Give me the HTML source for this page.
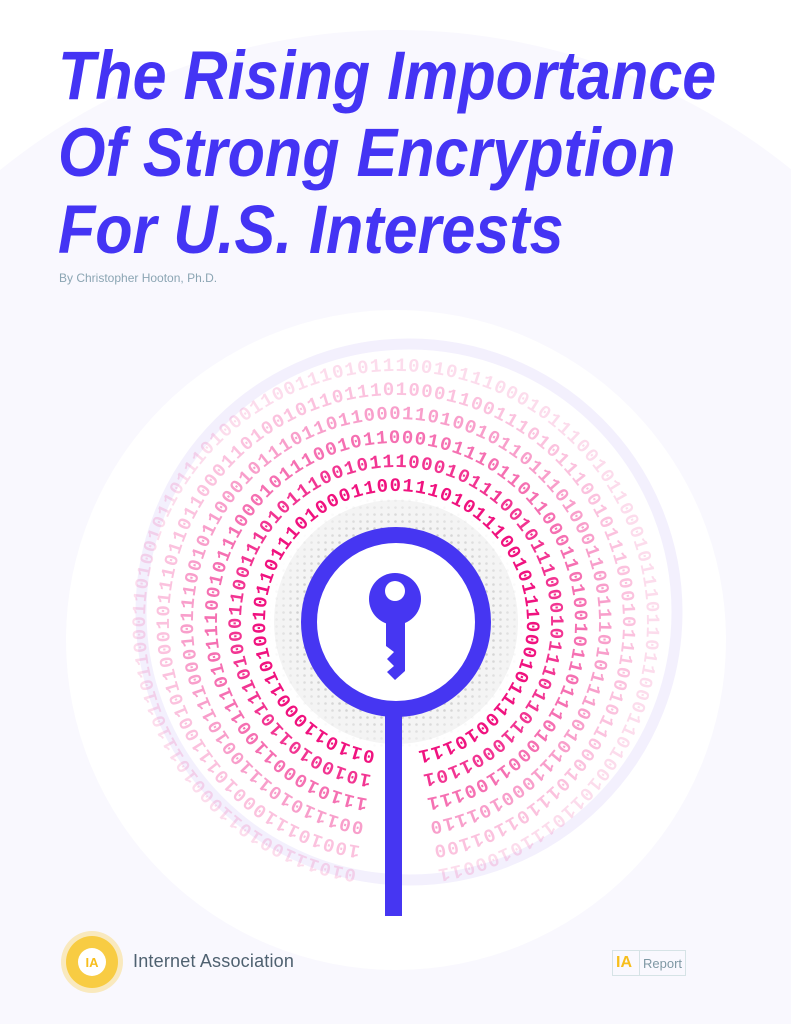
<!DOCTYPE html>
<html><head><meta charset="utf-8"><style>
html,body{margin:0;padding:0;}
body{width:791px;height:1024px;position:relative;overflow:hidden;background:#fff;font-family:"Liberation Sans",sans-serif;}
svg.bg{position:absolute;left:0;top:0;}
h1{position:absolute;left:58px;top:37px;margin:0;font:italic bold 69px/77px "Liberation Sans",sans-serif;color:#4434f4;letter-spacing:0;white-space:nowrap;transform:scaleX(0.885);transform-origin:0 0;}
.by{position:absolute;left:59px;top:271px;font-size:12px;color:#8ba5b3;}
.ia{position:absolute;left:133px;top:951px;font-size:18px;color:#4f6170;letter-spacing:0.2px;}
.rep{position:absolute;left:612px;top:950px;width:74px;height:26px;border:1px solid #d6e3e6;box-sizing:border-box;}
.rep .l{position:absolute;left:3px;top:3px;font:bold 16px "Liberation Sans",sans-serif;color:#f7be1c;}
.rep .d{position:absolute;left:26px;top:0;width:1px;height:24px;background:#d6e3e6;}
.rep .r{position:absolute;left:30px;top:5px;font-size:13px;color:#7f98a4;}
</style></head><body>
<svg class="bg" width="791" height="1024" viewBox="0 0 791 1024">
<defs>
<pattern id="dots" width="7" height="7" patternUnits="userSpaceOnUse"><circle cx="3.5" cy="3.5" r="1.3" fill="#9a9a9a"/></pattern>
<radialGradient id="fade" cx="0.5" cy="0.5" r="0.5"><stop offset="0.6" stop-color="#fff" stop-opacity="1"/><stop offset="1" stop-color="#fff" stop-opacity="0"/></radialGradient>
<mask id="m"><circle cx="396" cy="622" r="128" fill="url(#fade)"/></mask>
</defs>
<circle cx="396" cy="660" r="630" fill="#f9f8fe"/>
<circle cx="396" cy="640" r="330" fill="#fff"/>
<circle cx="409" cy="612" r="268" fill="none" stroke="#f3f0fd" stroke-width="11"/>
<circle cx="396" cy="622" r="122" fill="#f4f4f4"/>
<rect x="260" y="490" width="280" height="270" fill="url(#dots)" mask="url(#m)" opacity="0.7"/>
<g font-family="Liberation Mono, monospace" font-weight="bold" font-size="19" fill="#f0127f">
<path id="r1" d="M375.5 751.4 A131 131 0 1 1 416.5 751.4" fill="none"/>
<path id="r2" d="M371.8 775.1 A155 155 0 1 1 420.2 775.1" fill="none"/>
<path id="r3" d="M368 798.8 A179 179 0 1 1 424 798.8" fill="none"/>
<path id="r4" d="M364.3 822.5 A203 203 0 1 1 427.7 822.5" fill="none"/>
<path id="r5" d="M360.5 846.2 A227 227 0 1 1 431.5 846.2" fill="none"/>
<path id="r6" d="M356.7 869.9 A251 251 0 1 1 435.3 869.9" fill="none"/>
<text><textPath href="#r1" textLength="780" lengthAdjust="spacing">011011000110100101101110100011001110101110010111000101110010111</textPath></text>
<text opacity="0.85"><textPath href="#r2" textLength="922" lengthAdjust="spacing">10100101101110100011001110101110010111000101110010111000101110110110001101</textPath></text>
<text opacity="0.6"><textPath href="#r3" textLength="1065" lengthAdjust="spacing">1110100011001110101110010111000101110010110001011101101100011010010110111010001100111</textPath></text>
<text opacity="0.4"><textPath href="#r4" textLength="1209" lengthAdjust="spacing">0011101011100101110001011100101100010111011011000110100101101110100011001110101110010111000101110</textPath></text>
<text opacity="0.25"><textPath href="#r5" textLength="1352" lengthAdjust="spacing">100101110001011100101100010111011011000110100101101110100011001110101110010111000101110010110001011101101100</textPath></text>
<text opacity="0.14"><textPath href="#r6" textLength="1495" lengthAdjust="spacing">010111001011000101110110110001101001011011101000110011101011100101110001011100101100010111011011000110100101101110100011</textPath></text>
</g>
<circle cx="396" cy="622" r="87" fill="#fff" stroke="#4636f2" stroke-width="16"/>
<rect x="385" y="708" width="17" height="208" fill="#4636f2"/>
<circle cx="395" cy="599" r="26" fill="#4636f2"/>
<circle cx="395" cy="591" r="10" fill="#fff"/>
<path d="M386 618 L405 618 L405 671 L395 680 L387 672 L394 666 L387 659 L394 652 L386 646 Z" fill="#4636f2"/>
<g>
<circle cx="92" cy="962" r="31" fill="#f8c62a" opacity="0.3"/>
<circle cx="92" cy="962" r="26" fill="#f7c21a" opacity="0.75"/>
<circle cx="92" cy="962" r="14" fill="#fff"/>
<text x="92" y="967" text-anchor="middle" font-family="Liberation Sans, sans-serif" font-weight="bold" font-size="13" fill="#f7be1c">IA</text>
</g>
</svg>
<h1>The Rising Importance<br>Of Strong Encryption<br>For U.S. Interests</h1>
<div class="by">By Christopher Hooton, Ph.D.</div>
<div class="ia">Internet Association</div>
<div class="rep"><span class="l">IA</span><span class="d"></span><span class="r">Report</span></div>
</body></html>
